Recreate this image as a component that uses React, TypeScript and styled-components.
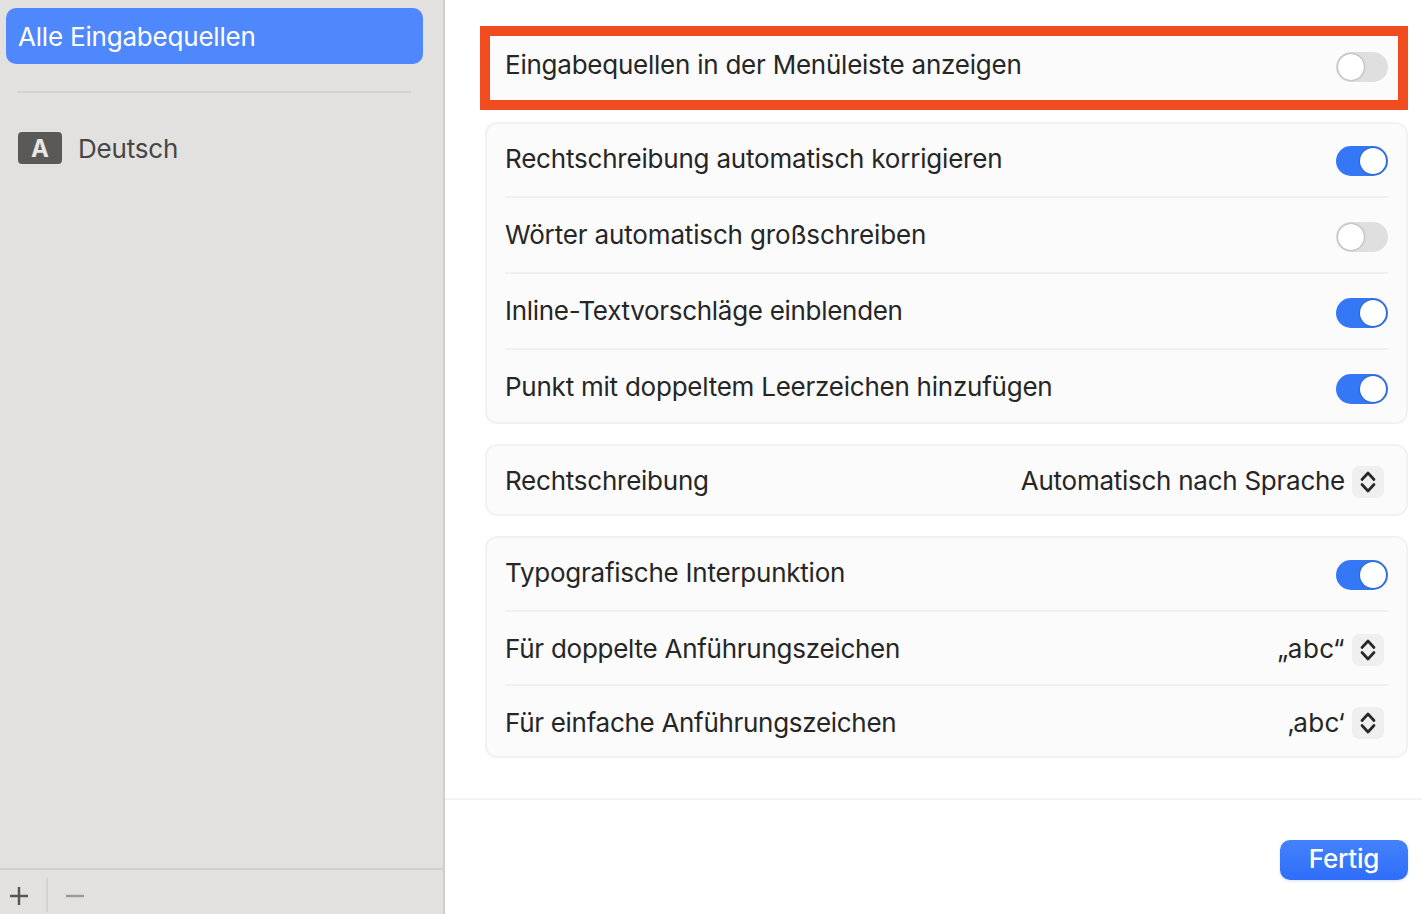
import * as React from 'react';
import styled, {createGlobalStyle} from "styled-components";

const GlobalStyle = createGlobalStyle`
	html, body {
		margin: 0;
		padding: 0;
		background: #fff;
		overflow: hidden;
	}
	body {
		font-family: Inter, "Liberation Sans", sans-serif;
		-webkit-font-smoothing: antialiased;
	}
`;

const Window = styled.div`
	width: 1422px;
	height: 914px;
	display: flex;
	overflow: hidden;
`;

const Sidebar = styled.div`
	width: 445px;
	flex: none;
	box-sizing: border-box;
	height: 914px;
	background: #e2e1df;
	border-right: 2px solid #cfcecd;
	display: flex;
	flex-direction: column;
`;
const SidebarTop = styled.div`
	flex-grow: 1;
	padding: 8px 20px 0 6px;
`;
const SelectedItem = styled.div`
	height: 56px;
	box-sizing: border-box;
	padding: 1px 0 0 12px;
	border-radius: 10px;
	background: #4f88fd;
	color: #fff;
	font-size: 26px;
	line-height: 56px;
	letter-spacing: -0.2px;
`;
const SidebarRule = styled.div`
	height: 2px;
	margin: 27px 12px 0 12px;
	background: #d3d2d0;
`;
const SourceRow = styled.div`
	display: flex;
	align-items: center;
	gap: 16px;
	margin: 39px 0 0 12px;
	height: 32px;
	color: #474645;
	font-size: 26px;
	letter-spacing: -0.18px;
`;
const SourceBadge = styled.div`
	width: 44px;
	height: 32px;
	border-radius: 4px;
	background: #5a5957;
	color: #e8e7e5;
	font-size: 24px;
	font-weight: 700;
	letter-spacing: 0;
	display: flex;
	align-items: center;
	justify-content: center;
`;
const SidebarFooter = styled.div`
	height: 46px;
	flex: none;
	box-sizing: border-box;
	border-top: 2px solid #d2d1cf;
	padding: 8px 0 0 0;
	display: flex;
	align-items: flex-start;
`;
const FooterButton = styled.div<{$width: number}>`
	width: ${p => p.$width}px;
	height: 36px;
	display: flex;
	align-items: center;
	justify-content: center;
	flex: none;
`;
const FooterSep = styled.div`
	width: 2px;
	height: 34px;
	margin-left: 8px;
	background: #d3d2d0;
	flex: none;
`;

const Main = styled.div`
	flex-grow: 1;
	height: 914px;
	display: flex;
	flex-direction: column;
`;
const Content = styled.div`
	height: 798px;
	box-sizing: border-box;
	padding: 26px 14px 0 35px;
	flex: none;
`;
const HighlightBox = styled.div`
	height: 84px;
	box-sizing: border-box;
	border: 10px solid #f04c20;
	background: #fbfbfb;
	padding: 0 10px 2px 15px;
	display: flex;
	align-items: center;
	justify-content: space-between;
`;
const Card = styled.div<{$top: number}>`
	margin: ${p => p.$top}px 0 0 5px;
	border: 2px solid #f2f2f2;
	border-radius: 12px;
	background: #fbfbfb;
	padding: 0 18px;
`;
const Row = styled.div<{$height: number; $shift: number; $last?: boolean}>`
	height: ${p => p.$height}px;
	box-sizing: border-box;
	padding-top: ${p => p.$shift}px;
	display: flex;
	align-items: center;
	justify-content: space-between;
	border-bottom: ${p => (p.$last ? "none" : "2px solid #f0f0f0")};
`;
const Label = styled.span<{$lift?: number; $tracking?: number}>`
	font-size: 26px;
	color: #262626;
	letter-spacing: ${p => p.$tracking ?? -0.24}px;
	position: relative;
	top: -${p => p.$lift ?? 3}px;
	white-space: nowrap;
`;
const Toggle = styled.div<{$on?: boolean}>`
	width: 52px;
	height: 30px;
	border-radius: 15px;
	box-sizing: border-box;
	background: ${p => (p.$on ? "#3478f6" : "#dfdfdf")};
	position: relative;
	flex: none;
	&::after {
		content: "";
		position: absolute;
		top: 2px;
		left: ${p => (p.$on ? "24px" : "2px")};
		width: 26px;
		height: 26px;
		border-radius: 50%;
		background: #fff;
		box-shadow: 0 0 2px rgba(0, 0, 0, 0.5);
	}
`;
const SelectGroup = styled.div`
	display: flex;
	align-items: center;
	gap: 7px;
	margin-right: 4px;
`;
const Stepper = styled.div`
	width: 32px;
	height: 32px;
	border-radius: 7px;
	background: #efefef;
	display: flex;
	align-items: center;
	justify-content: center;
	flex: none;
`;

const Footer = styled.div`
	flex-grow: 1;
	border-top: 2px solid #f3f3f3;
	padding: 40px 14px 0 0;
	display: flex;
	justify-content: flex-end;
	align-items: flex-start;
`;
const DoneButton = styled.div`
	width: 128px;
	height: 40px;
	box-sizing: border-box;
	padding-bottom: 3px;
	border-radius: 10px;
	background: linear-gradient(#4482fb, #2f6efa);
	box-shadow: 0 1px 3px rgba(47, 110, 250, 0.2);
	color: #fff;
	font-size: 26px;
	font-weight: 500;
	letter-spacing: -0.18px;
	display: flex;
	align-items: center;
	justify-content: center;
`;

const Chevrons = () => (
	<svg width="18" height="24" viewBox="0 0 18 24" fill="none" stroke="#262626" strokeWidth="2.7" strokeLinecap="round" strokeLinejoin="round">
		<path d="M3 9.5 L9 3 L15 9.5" />
		<path d="M3 14.5 L9 21 L15 14.5" />
	</svg>
);

const Select = ({value, lift = 2, tracking = -0.2}: {value: string; lift?: number; tracking?: number}) => (
	<SelectGroup>
		<Label $lift={lift} $tracking={tracking}>{value}</Label>
		<Stepper><Chevrons /></Stepper>
	</SelectGroup>
);

export default function App() {
	return (
		<Window>
			<GlobalStyle />
			<Sidebar>
				<SidebarTop>
					<SelectedItem>Alle Eingabequellen</SelectedItem>
					<SidebarRule />
					<SourceRow>
						<SourceBadge>A</SourceBadge>
						<span>Deutsch</span>
					</SourceRow>
				</SidebarTop>
				<SidebarFooter>
					<FooterButton $width={38}>
						<svg width="18" height="18" viewBox="0 0 18 18" stroke="#555" strokeWidth="2.4">
							<path d="M0 9 H18 M9 0 V18" />
						</svg>
					</FooterButton>
					<FooterSep />
					<FooterButton $width={54}>
						<svg width="18" height="4" viewBox="0 0 18 4" stroke="#9a9998" strokeWidth="2.4">
							<path d="M0 2 H18" />
						</svg>
					</FooterButton>
				</SidebarFooter>
			</Sidebar>
			<Main>
				<Content>
					<HighlightBox>
						<Label>Eingabequellen in der Menüleiste anzeigen</Label>
						<Toggle />
					</HighlightBox>
					<Card $top={12}>
						<Row $height={74} $shift={2}><Label $tracking={-0.2}>Rechtschreibung automatisch korrigieren</Label><Toggle $on /></Row>
						<Row $height={76} $shift={4}><Label $tracking={-0.15}>Wörter automatisch großschreiben</Label><Toggle /></Row>
						<Row $height={76} $shift={4}><Label $tracking={-0.3}>Inline-Textvorschläge einblenden</Label><Toggle $on /></Row>
						<Row $height={72} $shift={6} $last><Label>Punkt mit doppeltem Leerzeichen hinzufügen</Label><Toggle $on /></Row>
					</Card>
					<Card $top={20}>
						<Row $height={68} $shift={4} $last><Label $lift={2}>Rechtschreibung</Label><Select value="Automatisch nach Sprache" tracking={-0.26} /></Row>
					</Card>
					<Card $top={20}>
						<Row $height={74} $shift={2}><Label>Typografische Interpunktion</Label><Toggle $on /></Row>
						<Row $height={74} $shift={4}><Label $lift={2} $tracking={-0.26}>Für doppelte Anführungszeichen</Label><Select value="„abc“" tracking={0.5} /></Row>
						<Row $height={70} $shift={4} $last><Label $lift={1} $tracking={-0.3}>Für einfache Anführungszeichen</Label><Select value="‚abc‘" lift={1} tracking={0.3} /></Row>
					</Card>
				</Content>
				<Footer>
					<DoneButton>Fertig</DoneButton>
				</Footer>
			</Main>
		</Window>
	);
}
